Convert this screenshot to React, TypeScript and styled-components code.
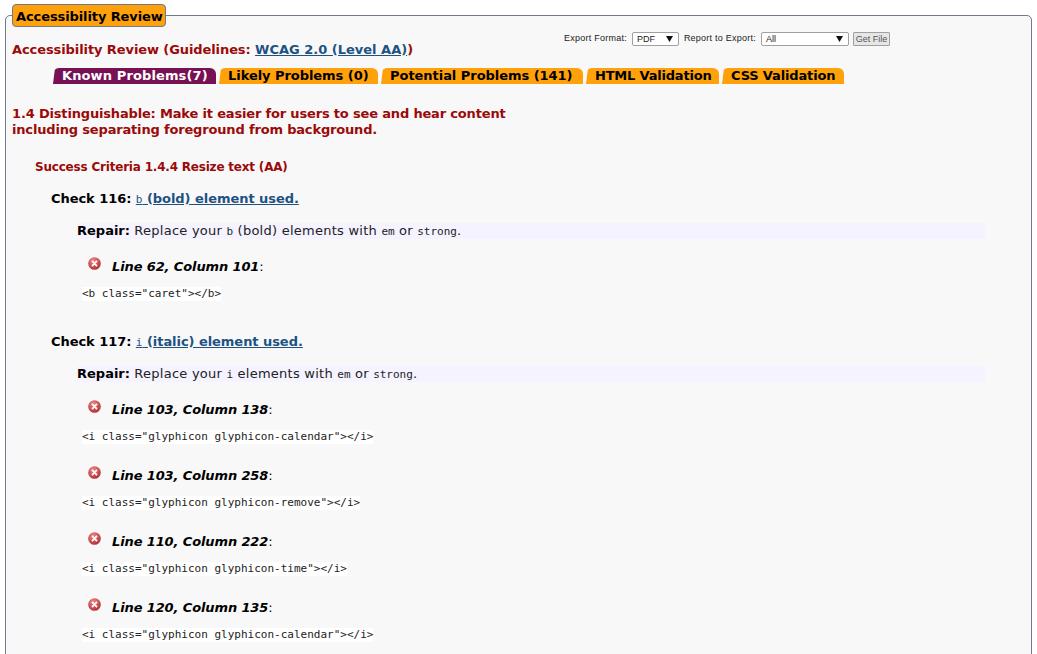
import React from "react";
import styled, { createGlobalStyle } from "styled-components";

const GlobalStyle = createGlobalStyle`
  html, body {
    margin: 0;
    height: 654px;
    overflow: hidden;
    background: #ffffff;
    font-family: "DejaVu Sans", Verdana, sans-serif;
  }
`;

const Page = styled.div`
  padding: 15px 5px 0 5px;
`;

const Panel = styled.div`
  position: relative;
  border: 1px solid #707a8c;
  border-radius: 5px;
  background: #f8f8f8;
  padding: 16px 6px 0 6px;
  height: 700px;
`;

const Legend = styled.div`
  position: absolute;
  top: -12px;
  left: 6px;
  height: 21px;
  line-height: 23px;
  padding: 0 2px 0 3px;
  background: #ffa10a;
  border: 1px solid #707a8c;
  border-radius: 4px;
  font-size: 13px;
  font-weight: bold;
  letter-spacing: -0.1px;
  color: #000;
`;

const TopRow = styled.div`
  display: flex;
  align-items: flex-start;
`;

const Title = styled.h2`
  margin: 9px 0 0 0;
  font-size: 13px;
  line-height: 18px;
  font-weight: bold;
  letter-spacing: -0.09px;
  color: #9b0a0a;
  width: 552px;
`;

const TitleLink = styled.a`
  color: #1d5283;
  text-decoration: underline;
  letter-spacing: 0;
`;

const ExportForm = styled.form`
  display: flex;
  align-items: center;
  margin: 0;
  height: 14px;
  font-family: "Liberation Sans", Arial, sans-serif;
  font-size: 9px;
  color: #222;
`;

const ExportLabel = styled.span`
  margin: 0 5px 2px 0;
  letter-spacing: 0.24px;
`;

const FakeSelect = styled.div<{ $width: number }>`
  display: flex;
  align-items: center;
  justify-content: space-between;
  box-sizing: border-box;
  width: ${(p) => p.$width}px;
  height: 14px;
  margin-right: 5px;
  padding: 0 5px 0 4px;
  background: #fff;
  border: 1px solid #a0a0a0;
  border-radius: 2px;
  font-size: 9px;
  color: #222;
`;

const Arrow = styled.svg`
  width: 7px;
  height: 6px;
  fill: #111;
`;

const GetFile = styled.button`
  box-sizing: border-box;
  height: 14px;
  width: 37px;
  margin-left: -1px;
  padding: 0;
  background: #e6e6e6;
  border: 1px solid #a0a0a0;
  border-radius: 1px;
  font-family: "Liberation Sans", Arial, sans-serif;
  font-size: 9px;
  color: #555;
`;

const Tabs = styled.ul`
  display: flex;
  gap: 3px;
  list-style: none;
  margin: 9px 0 0 41px;
  padding: 0;
`;

const Tab = styled.li<{ $active?: boolean; $width: number; $tracking: number }>`
  box-sizing: border-box;
  width: ${(p) => p.$width}px;
  height: 16px;
  line-height: 16px;
  padding-left: 9px;
  font-size: 13px;
  font-weight: bold;
  letter-spacing: ${(p) => p.$tracking}px;
  white-space: nowrap;
  border-radius: 6px 6px 0 0;
  background: ${(p) => (p.$active ? "#771153" : "#ffa10a")};
  color: ${(p) => (p.$active ? "#fff" : "#000")};
  clip-path: polygon(0 100%, 2px 0, 100% 0, 100% 100%);
`;

const GuidelineHeading = styled.h3`
  margin: 22px 0 0 0;
  width: 510px;
  font-size: 13px;
  line-height: 16px;
  font-weight: bold;
  letter-spacing: -0.17px;
  color: #9b0a0a;
`;

const CriteriaHeading = styled.h4`
  margin: 21px 0 0 23px;
  font-size: 12px;
  line-height: 16px;
  font-weight: bold;
  letter-spacing: -0.2px;
  color: #9b0a0a;
`;

const CheckBlock = styled.section`
  margin: 16px 0 0 39px;
  padding-bottom: 13px;
`;

const CheckTitle = styled.h5`
  margin: 0;
  font-size: 13px;
  line-height: 16px;
  font-weight: bold;
  letter-spacing: -0.05px;
  color: #000;
`;

const CheckLink = styled.a`
  color: #1d5283;
  text-decoration: underline;
`;

const InlineCode = styled.code`
  font-family: "DejaVu Sans Mono", monospace;
  font-size: 11px;
  font-weight: normal;
  letter-spacing: 0;
`;

const Repair = styled.div`
  margin: 15px 0 0 26px;
  height: 16px;
  line-height: 16px;
  width: 908px;
  background: #f5f3ff;
  font-size: 13px;
  letter-spacing: 0.25px;
  color: #222;
`;

const RepairLabel = styled.strong`
  color: #000;
  letter-spacing: 0;
`;

const Problem = styled.div`
  margin: 0 0 0 31px;
  padding-bottom: 4px;
`;

const LineRow = styled.div`
  display: flex;
  align-items: center;
  margin: 18px 0 0 6px;
  height: 19px;
  font-size: 13px;
  letter-spacing: -0.12px;
  color: #000;
`;

const ErrorIcon = styled.svg`
  width: 13px;
  height: 13px;
  margin: -6px 11px 0 0;
`;

const LineText = styled.em`
  font-weight: bold;
`;

const CodeLine = styled.pre`
  width: fit-content;
  margin: 11px 0 0 0;
  height: 14px;
  line-height: 14px;
  background: #fff;
  font-family: "DejaVu Sans Mono", monospace;
  font-size: 11px;
  color: #222;
`;

const problemIcon = (
  <ErrorIcon viewBox="0 0 14 14">
    <defs>
      <radialGradient id="err" cx="40%" cy="30%" r="75%">
        <stop offset="0" stopColor="#f08a8a" />
        <stop offset="1" stopColor="#ad2a2e" />
      </radialGradient>
    </defs>
    <circle cx="7" cy="7" r="6.8" fill="url(#err)" />
    <path d="M4.8 4.8l4.4 4.4M9.2 4.8l-4.4 4.4" stroke="#fff" strokeWidth="1.9" strokeLinecap="round" />
  </ErrorIcon>
);

const ProblemRow: React.FC<{ line: number; col: number; code: string }> = ({ line, col, code }) => (
  <Problem>
    <LineRow>
      {problemIcon}
      <span>
        <LineText>
          Line {line}, Column {col}
        </LineText>
        :
      </span>
    </LineRow>
    <CodeLine>{code}</CodeLine>
  </Problem>
);

const downArrow = (
  <Arrow viewBox="0 0 7 6">
    <path d="M0 0h7L3.5 6z" />
  </Arrow>
);

export default function App() {
  return (
    <Page>
      <GlobalStyle />
      <Panel>
        <Legend>Accessibility Review</Legend>
        <TopRow>
          <Title>
            Accessibility Review (Guidelines: <TitleLink href="#">WCAG 2.0 (Level AA)</TitleLink>)
          </Title>
          <ExportForm>
            <ExportLabel>Export Format:</ExportLabel>
            <FakeSelect $width={47}>PDF {downArrow}</FakeSelect>
            <ExportLabel>Report to Export:</ExportLabel>
            <FakeSelect $width={88}>All {downArrow}</FakeSelect>
            <GetFile type="button">Get File</GetFile>
          </ExportForm>
        </TopRow>
        <Tabs>
          <Tab $active $width={163} $tracking={0.12}>Known Problems(7)</Tab>
          <Tab $width={159} $tracking={-0.05}>Likely Problems (0)</Tab>
          <Tab $width={202} $tracking={-0.04}>Potential Problems (141)</Tab>
          <Tab $width={133} $tracking={-0.2}>HTML Validation</Tab>
          <Tab $width={122} $tracking={-0.15}>CSS Validation</Tab>
        </Tabs>
        <GuidelineHeading>
          1.4 Distinguishable: Make it easier for users to see and hear content including separating foreground from background.
        </GuidelineHeading>
        <CriteriaHeading>Success Criteria 1.4.4 Resize text (AA)</CriteriaHeading>
        <CheckBlock>
          <CheckTitle>
            Check 116:{" "}
            <CheckLink href="#">
              <InlineCode>b</InlineCode> (bold) element used.
            </CheckLink>
          </CheckTitle>
          <Repair>
            <RepairLabel>Repair:</RepairLabel> Replace your <InlineCode>b</InlineCode> (bold) elements with{" "}
            <InlineCode>em</InlineCode> or <InlineCode>strong</InlineCode>.
          </Repair>
          <ProblemRow line={62} col={101} code={'<b class="caret"></b>'} />
        </CheckBlock>
        <CheckBlock>
          <CheckTitle>
            Check 117:{" "}
            <CheckLink href="#">
              <InlineCode>i</InlineCode> (italic) element used.
            </CheckLink>
          </CheckTitle>
          <Repair>
            <RepairLabel>Repair:</RepairLabel> Replace your <InlineCode>i</InlineCode> elements with{" "}
            <InlineCode>em</InlineCode> or <InlineCode>strong</InlineCode>.
          </Repair>
          <ProblemRow line={103} col={138} code={'<i class="glyphicon glyphicon-calendar"></i>'} />
          <ProblemRow line={103} col={258} code={'<i class="glyphicon glyphicon-remove"></i>'} />
          <ProblemRow line={110} col={222} code={'<i class="glyphicon glyphicon-time"></i>'} />
          <ProblemRow line={120} col={135} code={'<i class="glyphicon glyphicon-calendar"></i>'} />
        </CheckBlock>
      </Panel>
    </Page>
  );
}
